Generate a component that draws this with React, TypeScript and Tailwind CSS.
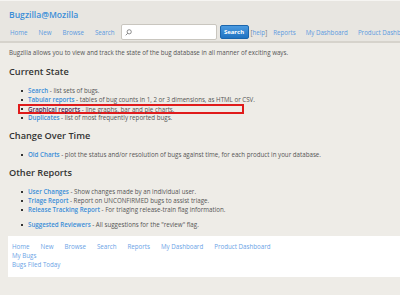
export default function App() {
  const font = { fontFamily: '"Open Sans", "Noto Sans", sans-serif' };
  return (
    <div className="w-[400px] h-[295px] overflow-hidden bg-[#eeece7] text-[6.2px] leading-[9px] text-[#555]" style={font}>
      {/* Header */}
      <div className="h-[43px] bg-[#e8e6e1] border-t border-t-[#f6f5f2] border-b-2 border-b-[#d6d3cc]">
        <div className="pl-[9px] pt-[8px] text-[8.6px] leading-[12px] font-semibold text-[#3b8ed8]">Bugzilla@Mozilla</div>
        <div className="flex items-center mt-[3px] pl-[10px] text-[6.2px] text-[#5b9ae0] whitespace-nowrap">
          <span className="shrink-0">Home</span>
          <span className="shrink-0 ml-[11px]">New</span>
          <span className="shrink-0 ml-[11px]">Browse</span>
          <span className="shrink-0 ml-[11px]">Search</span>
          <div className="shrink-0 ml-[6px] w-[96px] h-[16px] bg-white border border-[#c9c6bf] rounded-[2px] flex items-center pl-[3px]">
            <svg width="7" height="7" viewBox="0 0 10 10" fill="none" stroke="#777" strokeWidth="1.2">
              <circle cx="6" cy="4" r="3" />
              <path d="M4 6 L1 9" />
            </svg>
          </div>
          <div className="shrink-0 ml-[3px] w-[29px] h-[14px] rounded-[2px] bg-gradient-to-b from-[#4a9ae0] to-[#1f73c2] border border-[#1b66ad] text-white font-bold flex items-center justify-center text-[6px]">Search</div>
          <span className="shrink-0 ml-[2px] text-[#777]">[<span className="text-[#5b9ae0]">help</span>]</span>
          <span className="shrink-0 ml-[6px]">Reports</span>
          <span className="shrink-0 ml-[10px]">My Dashboard</span>
          <span className="shrink-0 ml-[10px]">Product Dashboard</span>
        </div>
      </div>

      {/* Body */}
      <div className="pl-[9px] pt-[5px] whitespace-nowrap">
        <p>Bugzilla allows you to view and track the state of the bug database in all manner of exciting ways.</p>

        <h2 className="mt-[8px] text-[9.2px] leading-[13px] font-semibold text-[#333]">Current State</h2>
        <ul className="mt-[8px] pl-[12px]">
          <li className="flex items-center"><Dot /><a className="font-semibold text-[#3b8ed8]">Search</a><span>&nbsp;- list sets of bugs.</span></li>
          <li className="flex items-center"><Dot /><a className="font-semibold text-[#3b8ed8]">Tabular reports</a><span>&nbsp;- tables of bug counts in 1, 2 or 3 dimensions, as HTML or CSV.</span></li>
          <li className="flex items-center -ml-[3px] pl-[1px] w-[226px] h-[10px] border-2 border-[#e01b1b]"><Dot /><a className="font-semibold text-[#4a2a55]">Graphical reports</a><span>&nbsp;- line graphs, bar and pie charts.</span></li>
          <li className="flex items-center -mt-[1px]"><Dot /><a className="font-semibold text-[#3b8ed8]">Duplicates</a><span>&nbsp;- list of most frequently reported bugs.</span></li>
        </ul>

        <h2 className="mt-[7px] text-[9.2px] leading-[13px] font-semibold text-[#333]">Change Over Time</h2>
        <ul className="mt-[8px] pl-[12px]">
          <li className="flex items-center"><Dot /><a className="font-semibold text-[#3b8ed8]">Old Charts</a><span>&nbsp;- plot the status and/or resolution of bugs against time, for each product in your database.</span></li>
        </ul>

        <h2 className="mt-[7px] text-[9.2px] leading-[13px] font-semibold text-[#333]">Other Reports</h2>
        <ul className="mt-[8px] pl-[12px]">
          <li className="flex items-center"><Dot /><a className="font-semibold text-[#3b8ed8]">User Changes</a><span>&nbsp;- Show changes made by an individual user.</span></li>
          <li className="flex items-center"><Dot /><a className="font-semibold text-[#3b8ed8]">Triage Report</a><span>&nbsp;- Report on UNCONFIRMED bugs to assist triage.</span></li>
          <li className="flex items-center"><Dot /><a className="font-semibold text-[#3b8ed8]">Release Tracking Report</a><span>&nbsp;- For triaging release-train flag information.</span></li>
        </ul>
        <ul className="mt-[6px] pl-[12px]">
          <li className="flex items-center"><Dot /><a className="font-semibold text-[#3b8ed8]">Suggested Reviewers</a><span>&nbsp;- All suggestions for the "review" flag.</span></li>
        </ul>
      </div>

      {/* Footer */}
      <div className="ml-[8px] mt-[7px] h-[41px] bg-white pl-[4px] pt-[6px] text-[#6aa3e6] whitespace-nowrap">
        <div className="flex">
          <span>Home</span>
          <span className="ml-[11px]">New</span>
          <span className="ml-[11px]">Browse</span>
          <span className="ml-[11px]">Search</span>
          <span className="ml-[11px]">Reports</span>
          <span className="ml-[11px]">My Dashboard</span>
          <span className="ml-[11px]">Product Dashboard</span>
        </div>
        <div>My Bugs</div>
        <div>Bugs Filed Today</div>
      </div>
    </div>
  );
}

function Dot() {
  return <span className="w-[2px] h-[2px] bg-[#333] mr-[5px] shrink-0" />;
}
